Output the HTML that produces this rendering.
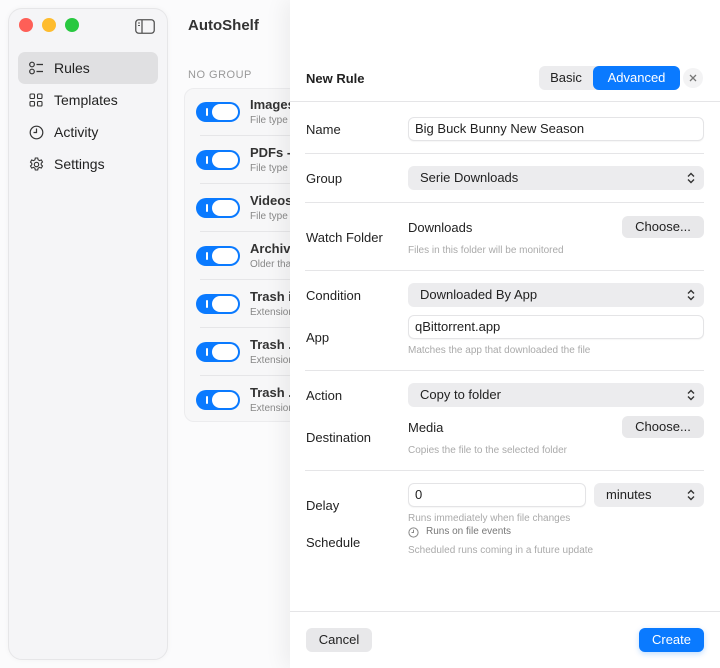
<!DOCTYPE html>
<html><head><meta charset="utf-8"><style>
*{box-sizing:border-box;margin:0;padding:0}
body{width:720px;height:668px;overflow:hidden;background:#fbfbfc;font-family:"Liberation Sans",sans-serif;color:#222;position:relative}
.a{position:absolute}
.side{left:8px;top:8px;width:160px;height:652px;border-radius:14px;background:#f5f5f7;border:1px solid #e6e6e8;box-shadow:0 0 6px rgba(0,0,0,.04)}
.dot{width:14px;height:14px;border-radius:50%;top:18px}
.nav{left:18px;width:140px;height:32px;border-radius:7px;font-size:14px;line-height:32px;padding-left:36px;color:#222}
.nav svg{position:absolute;left:11px;top:9px}
.card{left:184px;top:88px;width:130px;height:334px;background:#f7f7f8;border:1px solid #ececee;border-radius:10px}
.tg{left:196px;width:44px;height:20px;border-radius:10px;background:#0a7aff}
.tg:before{content:"";position:absolute;left:10px;top:6px;width:2px;height:8px;background:#fff;border-radius:1px}
.tg:after{content:"";position:absolute;right:2px;top:2px;width:26px;height:16px;background:#fff;border-radius:8px}
.rt{left:250px;font-size:13px;font-weight:bold;color:#333}
.rs{left:250px;font-size:10px;color:#888}
.hr{left:200px;width:100px;height:1px;background:#e6e6e8}
.sheet{left:290px;top:0;width:430px;height:668px;background:#fff;box-shadow:-6px 0 20px rgba(0,0,0,.06)}
.lb{left:306px;font-size:13px;color:#222}
.inp{left:408px;width:296px;height:24px;border:1px solid #e4e4e6;border-radius:6px;background:#fff;font-size:13px;line-height:22px;padding-left:6px;box-shadow:0 1px 1px rgba(0,0,0,.04)}
.sel{left:408px;width:296px;height:24px;border-radius:6px;background:#ececee;font-size:13px;line-height:24px;padding-left:12px}
.ch{position:absolute;right:9px;top:6px}
.hint{left:408px;font-size:10px;color:#aaa}
.dv{left:305px;width:399px;height:1px;background:#e5e5e7}
.btn{height:22px;border-radius:6px;background:#e8e8ea;font-size:13px;line-height:22px;text-align:center}
</style></head><body>
<div class="a side"></div>
<div class="a dot" style="left:19px;background:#fe5f57"></div>
<div class="a dot" style="left:42px;background:#febc2e"></div>
<div class="a dot" style="left:65px;background:#28c840"></div>
<svg class="a" style="left:135px;top:19px" width="20" height="15" viewBox="0 0 20 15"><rect x="0.75" y="0.75" width="18.5" height="13.5" rx="3" fill="none" stroke="#555" stroke-width="1.3"/><line x1="7" y1="1" x2="7" y2="14" stroke="#555" stroke-width="1.3"/><line x1="3" y1="4" x2="5" y2="4" stroke="#555"/><line x1="3" y1="6.5" x2="5" y2="6.5" stroke="#555"/></svg>
<div class="a nav" style="top:52px;background:#e0e0e2"><svg width="16" height="14" viewBox="0 0 16 14"><circle cx="3" cy="3.5" r="2.3" fill="none" stroke="#333" stroke-width="1.2"/><circle cx="3" cy="10.5" r="2.3" fill="none" stroke="#333" stroke-width="1.2"/><line x1="7.5" y1="3.5" x2="14" y2="3.5" stroke="#333" stroke-width="1.3"/><line x1="7.5" y1="10.5" x2="14" y2="10.5" stroke="#333" stroke-width="1.3"/></svg>Rules</div>
<div class="a nav" style="top:84px"><svg width="14" height="14" viewBox="0 0 14 14" fill="none" stroke="#333" stroke-width="1.1"><rect x="1" y="1" width="4.5" height="4.5" rx="1"/><rect x="8.5" y="1" width="4.5" height="4.5" rx="1"/><rect x="1" y="8.5" width="4.5" height="4.5" rx="1"/><rect x="8.5" y="8.5" width="4.5" height="4.5" rx="1"/></svg>Templates</div>
<div class="a nav" style="top:116px"><svg width="15" height="15" viewBox="0 0 15 15" fill="none" stroke="#333" stroke-width="1.2"><circle cx="7.5" cy="7.5" r="6.3"/><path d="M7.5 3.5V7.5H4.5"/></svg>Activity</div>
<div class="a nav" style="top:148px"><svg width="15" height="15" viewBox="0 0 15 15" fill="none" stroke="#333" stroke-width="1.1"><circle cx="7.5" cy="7.5" r="2.2"/><path d="M6.3 1h2.4l.4 1.8 1.5.8 1.7-.7 1.2 2.1-1.3 1.2v1.6l1.3 1.2-1.2 2.1-1.7-.7-1.5.8-.4 1.8H6.3l-.4-1.8-1.5-.8-1.7.7-1.2-2.1 1.3-1.2V6.3L1.5 5.1l1.2-2.1 1.7.7 1.5-.8z"/></svg>Settings</div>
<div class="a" style="left:188px;top:17px;font-size:15px;font-weight:bold;color:#333">AutoShelf</div>
<div class="a" style="left:188px;top:69px;font-size:11px;color:#999;letter-spacing:.5px">NO GROUP</div>
<div class="a card"></div>
<div class="a tg" style="top:102px"></div><div class="a rt" style="top:97px">Images</div><div class="a rs" style="top:115px">File type</div><div class="a hr" style="top:135px"></div>
<div class="a tg" style="top:150px"></div><div class="a rt" style="top:145px">PDFs -</div><div class="a rs" style="top:163px">File type</div><div class="a hr" style="top:183px"></div>
<div class="a tg" style="top:198px"></div><div class="a rt" style="top:193px">Videos</div><div class="a rs" style="top:211px">File type</div><div class="a hr" style="top:231px"></div>
<div class="a tg" style="top:246px"></div><div class="a rt" style="top:241px">Archive</div><div class="a rs" style="top:259px">Older than</div><div class="a hr" style="top:279px"></div>
<div class="a tg" style="top:294px"></div><div class="a rt" style="top:289px">Trash i</div><div class="a rs" style="top:307px">Extension</div><div class="a hr" style="top:327px"></div>
<div class="a tg" style="top:342px"></div><div class="a rt" style="top:337px">Trash .</div><div class="a rs" style="top:355px">Extension</div><div class="a hr" style="top:375px"></div>
<div class="a tg" style="top:390px"></div><div class="a rt" style="top:385px">Trash .</div><div class="a rs" style="top:403px">Extension</div>

<div class="a sheet"></div>
<div class="a" style="left:306px;top:71px;font-size:13px;font-weight:bold">New Rule</div>
<div class="a" style="left:539px;top:66px;width:141px;height:24px;border-radius:6px;background:#ececee"></div>
<div class="a" style="left:539px;top:66px;width:54px;height:24px;font-size:13px;line-height:24px;text-align:center">Basic</div>
<div class="a" style="left:593px;top:66px;width:87px;height:24px;border-radius:6px;background:#0a7aff;color:#fff;font-size:13px;line-height:24px;text-align:center">Advanced</div>
<div class="a" style="left:683px;top:68px;width:20px;height:20px;border-radius:50%;background:#f3f3f4"></div>
<svg class="a" style="left:689px;top:74px" width="8" height="8" viewBox="0 0 8 8" stroke="#777" stroke-width="1.3"><path d="M1 1L7 7M7 1L1 7"/></svg>
<div class="a" style="left:290px;top:101px;width:430px;height:1px;background:#e5e5e7"></div>

<div class="a lb" style="top:122px">Name</div>
<div class="a inp" style="top:117px">Big Buck Bunny New Season</div>
<div class="a dv" style="top:153px"></div>
<div class="a lb" style="top:171px">Group</div>
<div class="a sel" style="top:166px">Serie Downloads<svg class="ch" width="8" height="12" viewBox="0 0 8 12" fill="none" stroke="#333" stroke-width="1.4"><path d="M1 4.5L4 1.5 7 4.5M1 7.5L4 10.5 7 7.5"/></svg></div>
<div class="a dv" style="top:202px"></div>
<div class="a lb" style="top:230px">Watch Folder</div>
<div class="a" style="left:408px;top:220px;font-size:13px">Downloads</div>
<div class="a btn" style="left:622px;top:216px;width:82px">Choose...</div>
<div class="a hint" style="top:245px">Files in this folder will be monitored</div>
<div class="a dv" style="top:270px"></div>
<div class="a lb" style="top:288px">Condition</div>
<div class="a sel" style="top:283px">Downloaded By App<svg class="ch" width="8" height="12" viewBox="0 0 8 12" fill="none" stroke="#333" stroke-width="1.4"><path d="M1 4.5L4 1.5 7 4.5M1 7.5L4 10.5 7 7.5"/></svg></div>
<div class="a lb" style="top:330px">App</div>
<div class="a inp" style="top:315px">qBittorrent.app</div>
<div class="a hint" style="top:345px">Matches the app that downloaded the file</div>
<div class="a dv" style="top:370px"></div>
<div class="a lb" style="top:388px">Action</div>
<div class="a sel" style="top:383px">Copy to folder<svg class="ch" width="8" height="12" viewBox="0 0 8 12" fill="none" stroke="#333" stroke-width="1.4"><path d="M1 4.5L4 1.5 7 4.5M1 7.5L4 10.5 7 7.5"/></svg></div>
<div class="a lb" style="top:430px">Destination</div>
<div class="a" style="left:408px;top:420px;font-size:13px">Media</div>
<div class="a btn" style="left:622px;top:416px;width:82px">Choose...</div>
<div class="a hint" style="top:445px">Copies the file to the selected folder</div>
<div class="a dv" style="top:470px"></div>
<div class="a lb" style="top:498px">Delay</div>
<div class="a inp" style="top:483px;width:178px">0</div>
<div class="a sel" style="top:483px;left:594px;width:110px">minutes<svg class="ch" width="8" height="12" viewBox="0 0 8 12" fill="none" stroke="#333" stroke-width="1.4"><path d="M1 4.5L4 1.5 7 4.5M1 7.5L4 10.5 7 7.5"/></svg></div>
<div class="a hint" style="top:513px">Runs immediately when file changes</div>
<svg class="a" style="left:408px;top:527px" width="11" height="11" viewBox="0 0 11 11" fill="none" stroke="#888" stroke-width="1"><circle cx="5.5" cy="5.5" r="4.6"/><path d="M5.5 2.8V5.5H3.5"/></svg>
<div class="a" style="left:426px;top:526px;font-size:10px;color:#777">Runs on file events</div>
<div class="a lb" style="top:535px">Schedule</div>
<div class="a hint" style="top:545px">Scheduled runs coming in a future update</div>
<div class="a" style="left:290px;top:611px;width:430px;height:1px;background:#e5e5e7"></div>
<div class="a btn" style="left:306px;top:628px;width:66px;height:24px;line-height:24px">Cancel</div>
<div class="a btn" style="left:639px;top:628px;width:65px;height:24px;line-height:24px;background:#0a7aff;color:#fff;box-shadow:0 2px 6px rgba(10,122,255,.25)">Create</div>
</body></html>
